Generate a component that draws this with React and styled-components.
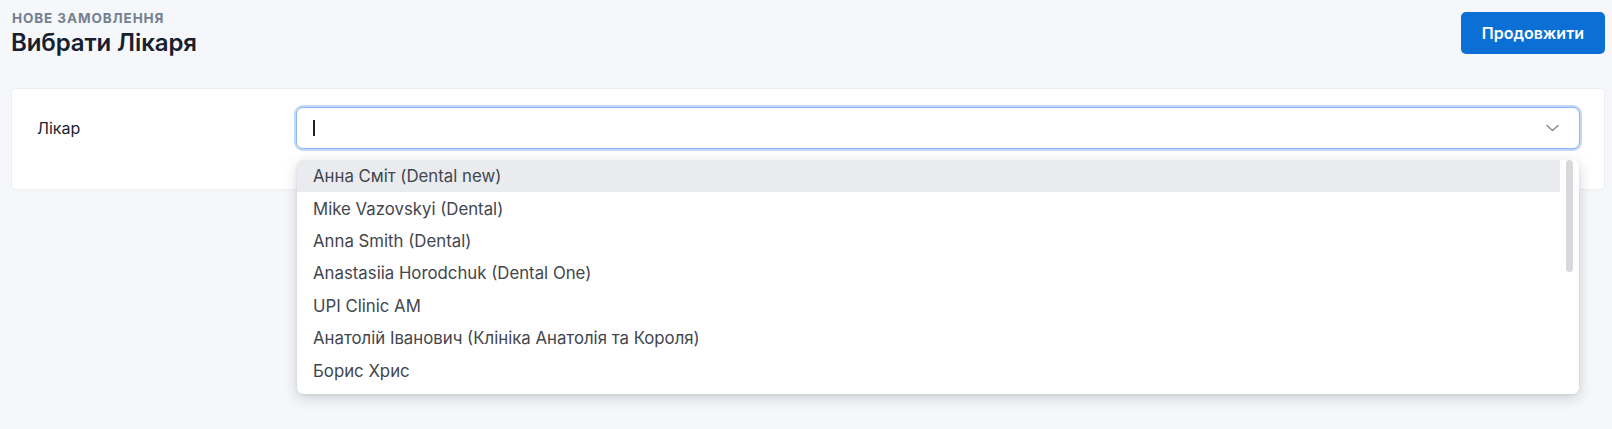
import React from "react";
import styled, { createGlobalStyle } from "styled-components";

const GlobalStyle = createGlobalStyle`
  html, body {
    margin: 0;
    padding: 0;
    background: #f5f7fa;
    font-family: "Inter", "Noto Sans", sans-serif;
  }
  * { box-sizing: border-box; }
`;

const doctors = [
  "Анна Сміт (Dental new)",
  "Mike Vazovskyi (Dental)",
  "Anna Smith (Dental)",
  "Anastasiia Horodchuk (Dental One)",
  "UPI Clinic AM",
  "Анатолій Іванович (Клініка Анатолія та Короля)",
  "Борис Хрис",
];

export default function App() {
  return (
    <Page>
      <GlobalStyle />
      <Header>
        <div>
          <Eyebrow>НОВЕ ЗАМОВЛЕННЯ</Eyebrow>
          <Title>Вибрати Лікаря</Title>
        </div>
        <PrimaryButton>Продовжити</PrimaryButton>
      </Header>

      <Card>
        <FormRow>
          <Label>Лікар</Label>
          <SelectWrap>
            <SelectBox>
              <Caret />
              <Chevron viewBox="0 0 14 8">
                <path d="M1 1.2l6 5.6 6-5.6" />
              </Chevron>
            </SelectBox>
            <Menu>
              <MenuList>
                {doctors.map((d, i) => (
                  <Option key={d} active={i === 0}>
                    {d}
                  </Option>
                ))}
              </MenuList>
              <Scrollbar>
                <Thumb />
              </Scrollbar>
            </Menu>
          </SelectWrap>
        </FormRow>
      </Card>
    </Page>
  );
}

const Page = styled.div`
  padding: 11px 7px 0 11px;
  min-height: 429px;
`;

const Header = styled.div`
  display: flex;
  justify-content: space-between;
  align-items: flex-start;
`;

const Eyebrow = styled.div`
  font-size: 13.5px;
  font-weight: 700;
  letter-spacing: 0.9px;
  color: #748091;
  line-height: 14px;
  margin-left: 1px;
`;

const Title = styled.h1`
  margin: 4px 0 0;
  font-size: 24px;
  font-weight: 600;
  color: #16202e;
  line-height: 28px;
  letter-spacing: -0.1px;
`;

const PrimaryButton = styled.button`
  margin-top: 1px;
  height: 42px;
  padding: 0 21px;
  border: none;
  border-radius: 5px;
  background: #0b6fd6;
  color: #fff;
  font-family: inherit;
  font-size: 16px;
  font-weight: 600;
  cursor: pointer;
`;

const Card = styled.div`
  margin-top: 31px;
  background: #fff;
  border: 1px solid #eceef2;
  border-radius: 4px;
  padding: 18px 24px 40px 25px;
`;

const FormRow = styled.div`
  display: grid;
  grid-template-columns: 259px 1fr;
  align-items: center;
`;

const Label = styled.div`
  font-size: 16px;
  color: #1b2431;
`;

const SelectWrap = styled.div`
  position: relative;
`;

const SelectBox = styled.div`
  height: 42px;
  border: 1px solid #8fb6ef;
  box-shadow: 0 0 0 2px #c3d8f7;
  border-radius: 7px;
  background: #fff;
  display: flex;
  align-items: center;
  padding: 0 20px 0 16px;
`;

const Caret = styled.span`
  width: 2px;
  height: 16px;
  background: #222;
`;

const Chevron = styled.svg`
  margin-left: auto;
  width: 13px;
  height: 8px;
  fill: none;
  stroke: #858c97;
  stroke-width: 1.5;
  stroke-linecap: round;
  stroke-linejoin: round;
`;

const Menu = styled.div`
  position: absolute;
  top: 53px;
  left: 1px;
  right: 1px;
  height: 234px;
  background: #fff;
  border-radius: 6px;
  box-shadow: 0 4px 14px rgba(20, 30, 45, 0.18), 0 1px 3px rgba(20, 30, 45, 0.08);
  overflow: hidden;
  z-index: 10;
`;

const MenuList = styled.div`
  margin-right: 19px;
`;

const Option = styled.div`
  height: 32.4px;
  display: flex;
  align-items: center;
  padding-left: 16px;
  font-size: 16.8px;
  color: #42464d;
  background: ${({ active }) => (active ? "#e9ebee" : "transparent")};
`;

const Scrollbar = styled.div`
  position: absolute;
  top: 0;
  right: 6px;
  width: 7px;
  height: 100%;
`;

const Thumb = styled.div`
  height: 112px;
  border-radius: 4px;
  background: #d7d9dc;
`;
